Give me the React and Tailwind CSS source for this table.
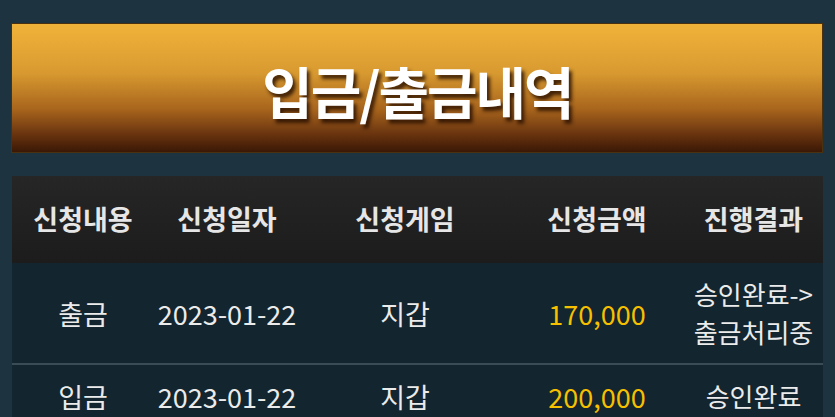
import React from "react";

const rows = [
  { type: "출금", date: "2023-01-22", game: "지갑", amount: "170,000", result: ["승인완료->", "출금처리중"] },
  { type: "입금", date: "2023-01-22", game: "지갑", amount: "200,000", result: ["승인완료"] },
];

const cols = ["w-[142px]", "w-[146px]", "w-[210px]", "w-[174px]", "flex-1"];

const App = () => {
  return (
    <div
      className="w-[835px] h-[417px] overflow-hidden bg-[#1d3440] px-3 pt-[23px]"
      style={{ fontFamily: '"Noto Sans CJK KR", "Noto Sans", sans-serif' }}
    >
      <div className="h-[130px] -ml-px bg-[linear-gradient(to_bottom,#f2b33a_0%,#d89a30_38%,#a9661d_66%,#6a340f_86%,#3a1805_100%)] flex items-center justify-center border border-[#4a3210]">
        <h1 className="text-white font-bold text-[56px] leading-none scale-x-[0.98] tracking-[-2px] [text-shadow:3px_4px_4px_rgba(40,15,0,0.85)] mt-1">
          입금/출금내역
        </h1>
      </div>

      <div className="mt-[23px]">
        <div className="flex h-[87px] items-center bg-gradient-to-b from-[#262626] to-[#1c1c1c] text-[#e6e6e6] font-bold text-[27px]">
          <div className={`${cols[0]} text-center`}>신청내용</div>
          <div className={`${cols[1]} text-center`}>신청일자</div>
          <div className={`${cols[2]} text-center`}>신청게임</div>
          <div className={`${cols[3]} text-center`}>신청금액</div>
          <div className={`${cols[4]} text-center`}>진행결과</div>
        </div>
        {rows.map((r, i) => (
          <div
            key={i}
            className={`flex items-center bg-[#13252e] text-[#ebebeb] text-[27px] leading-[35px] py-[12px] ${i > 0 ? "border-t-2 border-[#3a4c55]" : ""}`}
          >
            <div className={`${cols[0]} text-center`}>{r.type}</div>
            <div className={`${cols[1]} text-center`}>{r.date}</div>
            <div className={`${cols[2]} text-center`}>{r.game}</div>
            <div className={`${cols[3]} text-center text-[#f6c000]`}>{r.amount}</div>
            <div className={`${cols[4]} text-center text-[26px] leading-[38px]`}>
              {r.result.map((l) => (
                <div key={l}>{l}</div>
              ))}
            </div>
          </div>
        ))}
      </div>
    </div>
  );
};

export default App;
